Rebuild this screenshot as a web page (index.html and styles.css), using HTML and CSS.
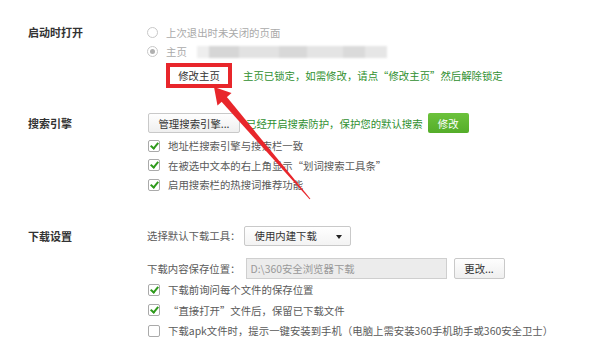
FILE: index.html
```html
<!DOCTYPE html>
<html>
<head>
<meta charset="utf-8">
<link rel="stylesheet" href="styles.css">
</head>
<body>
<div class="page">
  <div class="section s1">
    <div class="label">启动时打开</div>
    <div class="content">
      <div class="row"><span class="radio"></span><span class="dim">上次退出时未关闭的页面</span></div>
      <div class="row"><span class="radio on"></span><span class="dim">主页</span>
        <span class="blur"><i class="b1"></i><i class="b2"></i><i class="b3"></i><i class="b4"></i><i class="b5"></i><i class="b6"></i><i class="b7"></i></span>
      </div>
      <div class="row lockrow">
        <span class="redbox"><span class="btn-in">修改主页</span></span>
        <span class="green">主页已锁定，如需修改，请点“修改主页”然后解除锁定</span>
      </div>
    </div>
  </div>

  <div class="section s2">
    <div class="label lbl2">搜索引擎</div>
    <div class="content">
      <div class="row btnrow">
        <span class="btn mgr">管理搜索引擎...</span>
        <span class="green g2">已经开启搜索防护，保护您的默认搜索</span>
        <span class="gbtn">修改</span>
      </div>
      <div class="crow"><span class="cb on"></span>地址栏搜索引擎与搜索栏一致</div>
      <div class="crow"><span class="cb on"></span>在被选中文本的右上角显示“划词搜索工具条”</div>
      <div class="crow"><span class="cb on"></span>启用搜索栏的热搜词推荐功能</div>
    </div>
  </div>

  <div class="section s3">
    <div class="label lbl3">下载设置</div>
    <div class="content">
      <div class="row selrow">
        <span class="txt">选择默认下载工具：</span>
        <span class="select">使用内建下载<span class="caret"></span></span>
      </div>
      <div class="row inrow">
        <span class="txt">下载内容保存位置：</span>
        <span class="input">D:\360安全浏览器下载</span>
        <span class="btn chg">更改...</span>
      </div>
      <div class="drow"><span class="cb on"></span>下载前询问每个文件的保存位置</div>
      <div class="drow"><span class="cb on"></span>“直接打开”文件后，保留已下载文件</div>
      <div class="drow"><span class="cb"></span>下载apk文件时，提示一键安装到手机（电脑上需安装360手机助手或360安全卫士）</div>
      <div class="drow"><span class="cb"></span></div>
    </div>
  </div>

  <svg class="arrow" width="600" height="345" viewBox="0 0 600 345">
    <polygon points="214,87 231.5,93 217.5,105.5" fill="#e8262b"/>
    <polygon points="225.6,95.6 220.2,100.2 309.6,199.3 310.4,198.7" fill="#e8262b"/>
  </svg>
</div>
</body>
</html>
```

FILE: styles.css
```css
html, body {
  margin: 0;
  padding: 0;
  background: #fff;
}
.page {
  position: relative;
  width: 600px;
  height: 345px;
  overflow: hidden;
  font-family: "Noto Sans CJK SC", "Microsoft YaHei", sans-serif;
  font-size: 10.4px;
  color: #5a5a5a;
}
.section {
  display: flex;
  padding-left: 28px;
}
.label {
  width: 119px;
  flex: none;
  font-weight: bold;
  font-size: 11px;
  color: #333;
  line-height: 19px;
}
.content {
  display: flex;
  flex-direction: column;
  flex: 1;
}
.row {
  display: flex;
  align-items: center;
  height: 19px;
  white-space: nowrap;
}
.s1 { padding-top: 23px; }
.dim { color: #aaa; }
.radio {
  width: 9px;
  height: 9px;
  border: 1px solid #c8c8c8;
  border-radius: 50%;
  margin-right: 8px;
  box-sizing: content-box;
  position: relative;
  background: #fff;
}
.radio.on::after {
  content: "";
  position: absolute;
  left: 2px;
  top: 2px;
  width: 5px;
  height: 5px;
  border-radius: 50%;
  background: #b0b0b0;
}
.blur {
  display: flex;
  height: 12px;
  margin-left: 10px;
  filter: blur(1.3px);
}
.blur i { display: block; height: 12px; }
.b1 { width: 12px; background: #eee; }
.b2 { width: 30px; background: #d6d6d6; }
.b3 { width: 40px; background: #e2e2e2; }
.b4 { width: 28px; background: #d8d8d8; }
.b5 { width: 36px; background: #e4e4e4; }
.b6 { width: 22px; background: #dadada; }
.b7 { width: 22px; background: #e6e6e6; }

.lockrow {
  height: 25px;
  margin-top: 2px;
}
.redbox {
  margin-left: 19px;
  border: 4px solid #e8262b;
  width: 58px;
  height: 17px;
  display: flex;
  align-items: center;
  justify-content: center;
  background: #fff;
  color: #333;
  box-sizing: content-box;
}
.green {
  color: #2f8f2f;
  margin-left: 11px;
}

.s2 { padding-top: 25px; }
.lbl2 { line-height: 20px; }
.btnrow { height: 20px; }
.btn {
  display: flex;
  align-items: center;
  justify-content: center;
  height: 18px;
  border: 1px solid #c9c9c9;
  border-radius: 2px;
  background: linear-gradient(#fefefe, #efefef);
  color: #333;
}
.mgr { width: 90px; margin-left: 1px; }
.g2 { margin-left: 6px; }
.gbtn {
  margin-left: 5px;
  width: 41px;
  height: 20px;
  border-radius: 2px;
  background: linear-gradient(#6cc23c, #54ad29);
  color: #fff;
  display: flex;
  align-items: center;
  justify-content: center;
}
.crow, .drow {
  display: flex;
  align-items: center;
  white-space: nowrap;
  height: 19.5px;
}
.s2 .btnrow + .crow { margin-top: 3px; }
.drow { height: 20.6px; }
.cb {
  width: 10px;
  height: 10px;
  border: 1px solid #aaa;
  border-radius: 2px;
  margin-right: 8px;
  margin-left: 1px;
  position: relative;
  background: #fff;
  flex: none;
}
.cb.on::after {
  content: "";
  position: absolute;
  left: 3px;
  top: 0px;
  width: 3px;
  height: 6px;
  border-right: 2px solid #2f9a1c;
  border-bottom: 2px solid #2f9a1c;
  transform: rotate(40deg);
}

.s3 { padding-top: 30px; }
.lbl3 { line-height: 22px; }
.selrow { height: 22px; }
.select {
  margin-left: 3px;
  width: 107px;
  height: 20px;
  border: 1px solid #c9c9c9;
  border-radius: 2px;
  background: linear-gradient(#fff, #f3f3f3);
  color: #333;
  display: flex;
  align-items: center;
  padding-left: 10px;
  box-sizing: border-box;
  position: relative;
}
.caret {
  position: absolute;
  right: 8px;
  top: 8px;
  width: 0;
  height: 0;
  border-left: 3px solid transparent;
  border-right: 3px solid transparent;
  border-top: 4px solid #222;
}
.inrow {
  height: 21px;
  margin-top: 11px;
  margin-bottom: 1px;
}
.input {
  margin-left: 5px;
  width: 201px;
  height: 21px;
  box-sizing: border-box;
  border: 1px solid #cfcfcf;
  background: #ececec;
  color: #999;
  display: flex;
  align-items: center;
  padding-left: 4px;
}
.chg { width: 49px; margin-left: 7px; height: 19px; }

.arrow {
  position: absolute;
  left: 0;
  top: 0;
  pointer-events: none;
}
```
